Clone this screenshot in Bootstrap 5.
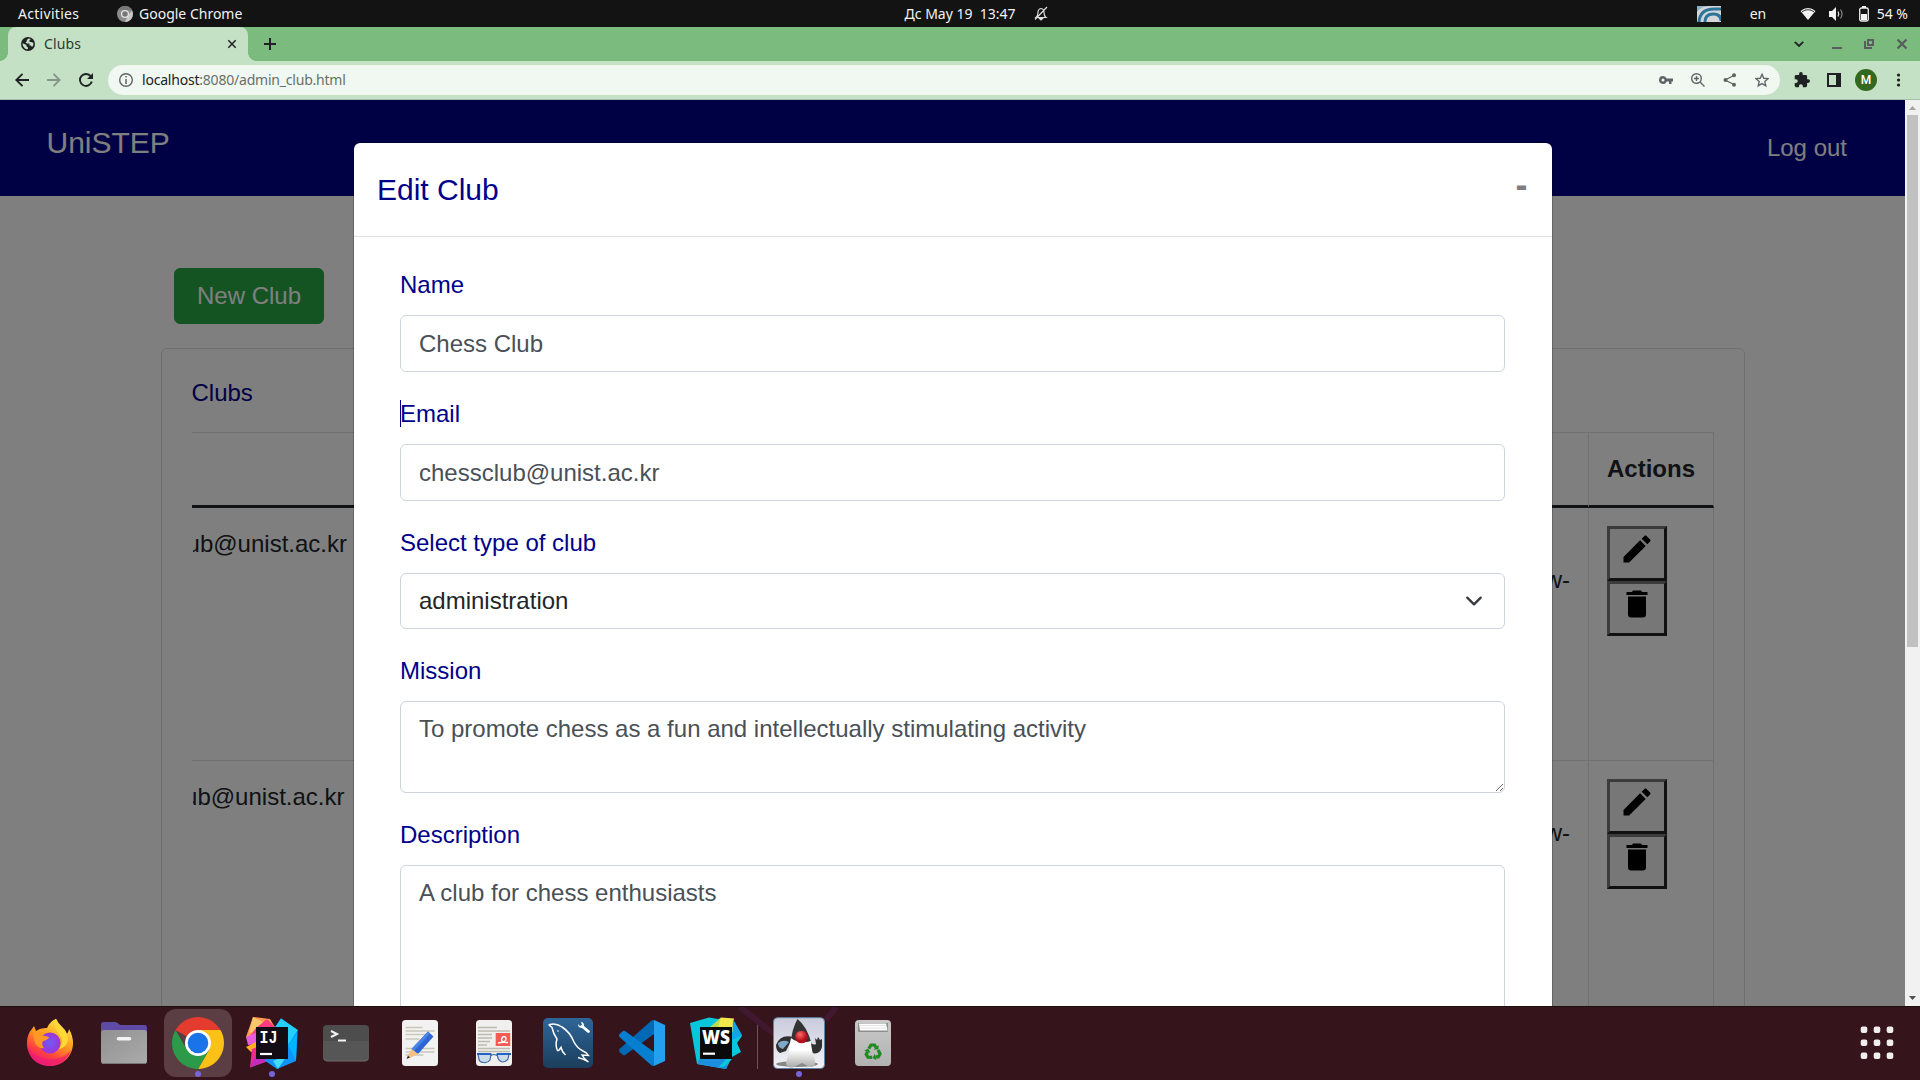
<!DOCTYPE html>
<html lang="en">
<head>
<meta charset="utf-8">
<title>Clubs</title>
<link href="https://cdn.jsdelivr.net/npm/bootstrap@5.3.0/dist/css/bootstrap.min.css" rel="stylesheet">
<style>
html,body{height:1080px;overflow:hidden}
body{font-family:"Liberation Sans",Arial,sans-serif;font-size:24px;line-height:36px;color:#212529;width:1920px}
svg{display:block;flex:none}
.sysfont{font-family:"Noto Sans","Open Sans",sans-serif;font-size:14px;line-height:20px;white-space:pre}
.topbar{height:27px;background:#131313;color:#f2f2f2}
.wide-track{letter-spacing:.3px}
.topside{flex:1 1 0}
.applabel{margin-left:6px}
.bell{margin-left:18px}
.tabstrip{height:34px;background:#7bbb7d;padding-left:8px;padding-right:5px}
.browsertab{width:240px;height:34px;background:#c5e1c5;border-radius:8px 8px 0 0;position:relative;padding:0 11px 0 13px;color:#2c3a2e}
.browsertab::before,.browsertab::after{content:"";position:absolute;bottom:0;width:8px;height:8px}
.browsertab::before{left:-8px;background:radial-gradient(circle at 0 0,transparent 7.5px,#c5e1c5 8px)}
.browsertab::after{right:-8px;background:radial-gradient(circle at 100% 0,transparent 7.5px,#c5e1c5 8px)}
.tabtitle{margin-left:9px;letter-spacing:.15px}
.toolbar{height:39px;background:#c5e1c5;border-bottom:1px solid #a9bfa9;padding:0 6px}
.omnibox{height:30px;border-radius:15px;background:#f1f8f1;margin:0 6px;padding:0 2px 0 11px}
.urltext{margin-left:9px;color:#68706b;letter-spacing:-.21px}
.urlhost{color:#202124}
.iconcell{width:32px;height:32px;display:flex;align-items:center;justify-content:center}
.avatar-m{width:22px;height:22px;border-radius:50%;background:#33691e;color:#fff;font:500 12px/22px Roboto,sans-serif;text-align:center}
.viewport{height:906px;position:relative;overflow:hidden;background:#fff}
.pagearea{width:1905px;height:906px;position:relative;overflow:hidden}
.sitenav{height:96px;background:#00008b;color:#fff;padding:0 58px 0 46.5px}
.sitename{font-size:30px;line-height:45px;margin-top:20px}
.logout{margin-top:30px}
.btn-new{--bs-btn-font-size:24px;--bs-btn-line-height:36px;--bs-btn-padding-x:22px;--bs-btn-padding-y:9px;--bs-btn-bg:#28a745;--bs-btn-color:#fff;--bs-btn-border-color:#28a745;--bs-btn-border-radius:6px;height:56px;width:150px;margin:72px 0 24px 174px;display:block;white-space:nowrap;text-align:left}
.clubcard{margin-left:161px;width:1584px;height:900px;border:1px solid #dfdfdf;border-radius:6px;padding:26px 30px 0}
.clubtitle{color:#00008b;margin-bottom:21px;margin-left:-.5px}
.clubtable{table-layout:fixed;width:1522px;border-collapse:separate;border-spacing:0}
.clubtable th{height:76px;border-top:1px solid #dee2e6;border-bottom:3px solid #212529;vertical-align:middle}
.clubtable td{height:253px;border-bottom:1px solid #dee2e6;vertical-align:top;padding-top:18px}
.clubtable .linkcell{padding-right:18px;text-align:right}
.actcol{width:126px;border-left:1px solid #dee2e6;border-right:1px solid #dee2e6;padding-left:18px}
.clipmail{width:154px;overflow:hidden;display:flex;justify-content:flex-end;white-space:nowrap}
.clipmail.shortclip{width:151.5px}
.toolbtn{width:60px;height:55px;border:3px solid;border-color:#767676 #222 #222 #767676;background:#efefef;padding:1px 9px 11px;display:block}
.dimmer{position:absolute;inset:0;background:rgba(0,0,0,.5)}
.editbox{position:absolute;left:353px;top:42px;width:1200px;height:1200px;background:#fff;background-clip:padding-box;border:1px solid rgba(0,0,0,.2);border-radius:7px}
.edithead{height:94px;border-bottom:1px solid #dee2e6;padding:24px 24px 24px 23px;color:#00008b}
.edithead h5{font-size:30px;line-height:45px;font-weight:400;margin:0}
.minus{font-weight:700;font-size:36px;line-height:36px;color:#000;opacity:.5;text-shadow:0 1px 0 #fff;margin-right:.5px}
.editbody{padding:30px 47px 0 46px}
.editbody .form-label{display:block;margin:0 0 12px;color:#00008b;position:relative}
.caret::before{content:"";position:absolute;left:0;top:4px;width:1px;height:27px;background:#00008b}
.editbody .form-control,.editbody .form-select{font-size:24px;line-height:36px;border:1px solid #ced4da;border-radius:6px;padding:9px 18px;margin-bottom:24px;height:57px;color:#495057;background-color:#fff}
.editbody .form-select{height:56px;color:#212529;background-size:24px 18px;background-position:right 18px center}
.editbody textarea.form-control{height:92px}
.editbody textarea.tallbox{height:240px}
.scrolltrack{position:absolute;right:0;top:0;width:15px;height:906px;background:#f1f1f1;display:flex;flex-direction:column;align-items:center}
.scrollthumb{width:11px;height:532px;background:#c1c1c1}
.dock{height:74px;background:#36141b;border-top:1px solid #1c0d10;padding:2px 9px 0 16px;position:relative}
.dockitem{width:68px;height:68px;margin-right:6px;border-radius:12px;position:relative}
.dockitem.active{background:#5b3e44}
.dockitem.running::after{content:"";position:absolute;left:31px;top:62px;width:6px;height:6px;border-radius:50%;background:#7764d8}
.docksep{width:1px;height:52px;margin:8px 7px 0 1px;background:#6d5358}
.docklines{position:absolute;left:730px;top:0}
</style>
</head>
<body>
<div class="topbar d-flex align-items-center">
  <div class="topside d-flex align-items-center">
    <span class="sysfont wide-track" style="margin-left:18px;width:99px">Activities</span>
    <svg width="16" height="16" viewBox="0 0 16 16"><circle cx="8" cy="8" r="8" fill="#8b8b8b"/><path d="M1 4A8 8 0 0 1 15 4H8z" fill="#777"/><path d="M15 4.500A8 8 0 0 1 8 16L11.500 9z" fill="#c9c9c9"/><circle cx="8" cy="8" r="3.400" fill="#777" stroke="#e6e6e6" stroke-width="1.300"/></svg>
    <span class="sysfont applabel">Google Chrome</span>
  </div>
  <span class="sysfont">Дс May 19  13:47</span>
  <div class="topside d-flex align-items-center">
    <svg class="bell" width="14" height="15" viewBox="0 0 14 15" fill="none" stroke="#ddd" stroke-width="1.200"><path d="M2 11.500Q4 10 4 6.500Q4 3 7 2.500Q10 3 10 6.500Q10 10 12 11.500zM1 13.500L13 1"/><path d="M5.500 12.500h3L7 14z" fill="#eee"/></svg>
    <div class="d-flex align-items-center ms-auto" style="padding-right:12px">
      <svg width="24" height="16" viewBox="0 0 24 16"><path fill="#d6d6da" d="M0 0h24v16H0z"/><path d="M2 16Q3 3 17 3h7M8 16Q8 8 16 8Q24 8 24 15" fill="none" stroke="#2b759b" stroke-width="3"/><path d="M0 6Q4 0 13 0H0z" fill="#8cb2c4"/></svg>
      <span class="sysfont" style="margin-left:29px;width:50px">en</span>
      <svg width="16" height="16" viewBox="0 0 16 16"><path d="M.500 5Q8-1 15.500 5L8 14z" fill="#f2f2f2"/><path d="M2 5.800Q8 1.500 14 5.800" fill="none" stroke="#333" stroke-width="1"/></svg>
      <svg style="margin-left:12px" width="16" height="16" viewBox="0 0 16 16"><path d="M1 5h3l4-4v14l-4-4H1z" fill="#f2f2f2"/><path d="M10 5.500Q11.500 8 10 10.500" fill="none" stroke="#ddd" stroke-width="1.300"/><path d="M12.500 3.500Q15.500 8 12.500 12.500" fill="none" stroke="#888" stroke-width="1.200"/></svg>
      <svg style="margin-left:15px" width="10" height="16" viewBox="0 0 10 16"><rect x=".700" y="2" width="8.600" height="13" rx="1.800" fill="none" stroke="#eee" stroke-width="1.300"/><path d="M3 0h4v2H3zM2 8h6v6H2z" fill="#f2f2f2"/></svg>
      <span class="sysfont" style="margin-left:8px">54 %</span>
    </div>
  </div>
</div>

<div class="tabstrip d-flex align-items-center">
  <div class="browsertab d-flex align-items-center">
    <svg width="14" height="14" viewBox="0 0 14 14"><circle cx="7" cy="7" r="7" fill="#202124"/><path d="M7.500 1.500L5.800 3v1.500L4.500 5.500l1.500 1h2.500v2H10l1 1.500q1.500-1.500 1.500-3.500Q12 5 10 5H8.500V3L10 2zM1.500 6.300q0 4 3.800 6L7 12V10.500L5.500 9.500V8z" fill="#c5e1c5"/></svg>
    <span class="sysfont tabtitle">Clubs</span>
    <svg class="ms-auto" width="10" height="10" viewBox="0 0 10 10"><path d="M1.300 1.300l7.400 7.400M8.700 1.300L1.300 8.700" stroke="#202124" stroke-width="1.500"/></svg>
  </div>
  <svg style="margin-left:16px" width="12" height="12" viewBox="0 0 12 12"><path d="M6 0v12M0 6h12" stroke="#202124" stroke-width="2"/></svg>
  <div class="d-flex ms-auto align-items-center">
    <svg width="10" height="6" viewBox="0 0 10 6"><path d="M.800.800L5 5L9.200.800" fill="none" stroke="#202124" stroke-width="1.800"/></svg>
    <svg style="margin-left:28px" width="10" height="10" viewBox="0 0 10 10"><path d="M0 8h10v2H0z" fill="#575c5c"/></svg>
    <svg style="margin-left:22px" width="10" height="10" viewBox="0 0 10 10" fill="none" stroke="#575c5c" stroke-width="1.900"><path d="M4 1h5v5H4zM1 2v7h7"/></svg>
    <svg style="margin-left:23px;margin-right:8px" width="10" height="10" viewBox="0 0 10 10"><path d="M.500.500l9 9M9.500.500l-9 9" stroke="#575c5c" stroke-width="2.200"/></svg>
  </div>
</div>

<div class="toolbar d-flex align-items-center">
  <div class="iconcell"><svg width="14" height="14" viewBox="0 0 14 14" fill="none" stroke="#202124" stroke-width="1.900"><path d="M14 7H1.500M7.500.800L1.300 7l6.200 6.200"/></svg></div>
  <div class="iconcell"><svg width="14" height="14" viewBox="0 0 14 14" fill="none" stroke="#849785" stroke-width="1.900"><path d="M0 7h12.500M6.500.800L12.700 7l-6.200 6.200"/></svg></div>
  <div class="iconcell"><svg width="14" height="14" viewBox="0 0 14 14"><path d="M11.700 3.200A6 6 0 1 0 12.800 8.500" fill="none" stroke="#202124" stroke-width="1.900"/><path d="M14 0v6H8z" fill="#202124"/></svg></div>
  <div class="omnibox d-flex align-items-center flex-grow-1">
    <svg width="14" height="14" viewBox="0 0 14 14"><circle cx="7" cy="7" r="6.300" fill="none" stroke="#5f6368" stroke-width="1.400"/><path d="M6.300 3h1.500v1.500H6.300zM6.300 6h1.500v5H6.300z" fill="#5f6368"/></svg>
    <span class="sysfont urltext"><span class="urlhost">localhost</span>:8080/admin_club.html</span>
    <div class="d-flex ms-auto">
      <div class="iconcell"><svg width="14" height="8" viewBox="0 0 14 8"><path fill-rule="evenodd" fill="#5f6368" d="M4 0a4 4 0 1 0 3.700 5.500H10V8h2.500V5.500H14v-3H7.700A4 4 0 0 0 4 0zm0 2.500a1.500 1.500 0 1 1 0 3a1.500 1.500 0 0 1 0-3z"/></svg></div>
      <div class="iconcell"><svg width="14" height="14" viewBox="0 0 14 14" fill="none" stroke="#5f6368" stroke-width="1.400"><circle cx="5.500" cy="5.500" r="4.800"/><path d="M9 9l4.500 4.500M3 5.500h5M5.500 3v5"/></svg></div>
      <div class="iconcell"><svg width="14" height="14" viewBox="0 0 14 14"><path d="M11 2.500L2 7l9 4.500" fill="none" stroke="#5f6368" stroke-width="1.300"/><g fill="#5f6368"><circle cx="11" cy="2.300" r="2"/><circle cx="2.500" cy="7" r="2"/><circle cx="11" cy="11.700" r="2"/></g></svg></div>
      <div class="iconcell"><svg width="14" height="14" viewBox="0 0 24 24"><path d="M12 2.200l3 6.800 7.400.7-5.600 5 1.700 7.300L12 18.100l-6.500 3.900 1.700-7.300-5.600-5L9 9z" fill="none" stroke="#5f6368" stroke-width="2.300"/></svg></div>
    </div>
  </div>
  <div class="iconcell"><svg width="16" height="16" viewBox="1 1 22 22"><path fill="#202124" d="M20.500 11H19V7a2 2 0 0 0-2-2h-4V3.500a2.500 2.500 0 0 0-5 0V5H4a2 2 0 0 0-2 2v3.800h1.500a2.700 2.700 0 0 1 0 5.400H2V20a2 2 0 0 0 2 2h3.800v-1.500a2.700 2.700 0 0 1 5.400 0V22H17a2 2 0 0 0 2-2v-4h1.500a2.500 2.500 0 0 0 0-5z"/></svg></div>
  <div class="iconcell"><svg width="14" height="14" viewBox="0 0 14 14"><path fill="#202124" fill-rule="evenodd" d="M0 0h14v14H0zM2 2v10h7V2z"/></svg></div>
  <div class="iconcell"><div class="avatar-m">M</div></div>
  <div class="iconcell"><svg width="4" height="14" viewBox="0 0 4 14" fill="#202124"><circle cx="2.500" cy="2" r="1.600"/><circle cx="2.500" cy="7" r="1.600"/><circle cx="2.500" cy="12" r="1.600"/></svg></div>
</div>

<div class="viewport">
  <div class="pagearea">
    <div class="sitenav d-flex justify-content-between align-items-start">
      <span class="sitename">UniSTEP</span><span class="logout">Log out</span>
    </div>
    <button class="btn btn-new">New Club</button>
    <div class="clubcard">
      <div class="clubtitle">Clubs</div>
      <table class="clubtable">
        <thead><tr><th></th><th></th><th class="actcol">Actions</th></tr></thead>
        <tbody>
          <tr><td><div class="clipmail">ub@unist.ac.kr</div></td><td class="linkcell"><br>w-</td>
          <td class="actcol">
            <button class="toolbtn"><svg width="36" height="36" viewBox="0 0 24 24"><path d="M20.710 7.040c.390-.390.390-1.040 0-1.410l-2.340-2.340c-.370-.390-1.020-.390-1.410 0l-1.840 1.830 3.750 3.750M3 17.250V21h3.750L17.810 9.930l-3.750-3.750z"/></svg></button>
            <button class="toolbtn"><svg width="36" height="36" viewBox="0 0 24 24"><path d="M19 4h-3.500l-1-1h-5l-1 1H5v2h14M6 19a2 2 0 0 0 2 2h8a2 2 0 0 0 2-2V7H6z"/></svg></button>
          </td></tr>
          <tr><td><div class="clipmail shortclip">ub@unist.ac.kr</div></td><td class="linkcell"><br>w-</td>
          <td class="actcol">
            <button class="toolbtn"><svg width="36" height="36" viewBox="0 0 24 24"><path d="M20.710 7.040c.390-.390.390-1.040 0-1.410l-2.340-2.340c-.370-.390-1.020-.390-1.410 0l-1.840 1.830 3.750 3.750M3 17.250V21h3.750L17.810 9.930l-3.750-3.750z"/></svg></button>
            <button class="toolbtn"><svg width="36" height="36" viewBox="0 0 24 24"><path d="M19 4h-3.500l-1-1h-5l-1 1H5v2h14M6 19a2 2 0 0 0 2 2h8a2 2 0 0 0 2-2V7H6z"/></svg></button>
          </td></tr>
        </tbody>
      </table>
    </div>
    <div class="dimmer"></div>
    <div class="editbox">
      <div class="edithead d-flex justify-content-between align-items-start"><h5>Edit Club</h5><span class="minus">-</span></div>
      <div class="editbody">
        <label class="form-label">Name</label>
        <input class="form-control" value="Chess Club">
        <label class="form-label caret">Email</label>
        <input class="form-control" value="chessclub@unist.ac.kr">
        <label class="form-label">Select type of club</label>
        <select class="form-select"><option>administration</option></select>
        <label class="form-label">Mission</label>
        <textarea class="form-control">To promote chess as a fun and intellectually stimulating activity</textarea>
        <label class="form-label">Description</label>
        <textarea class="form-control tallbox">A club for chess enthusiasts</textarea>
      </div>
    </div>
  </div>
  <div class="scrolltrack">
    <svg width="15" height="15" viewBox="0 0 15 15"><path d="M7.500 6L11 10H4z" fill="#a3a3a3"/></svg>
    <div class="scrollthumb"></div>
    <svg class="mt-auto" width="15" height="15" viewBox="0 0 15 15"><path d="M7.500 9L11 5H4z" fill="#505050"/></svg>
  </div>
</div>

<div class="dock d-flex align-items-start">
  <svg class="docklines" width="110" height="40" viewBox="0 0 110 40"><path d="M30 0L64 27M126 0L116 13" transform="translate(-20 0)" stroke="#40182f" stroke-width="6"/></svg>
  <div class="dockitem"><svg width="68" height="68" viewBox="0 0 68 68">
    <defs><linearGradient id="ff" x1=".8" y1="0" x2=".3" y2="1"><stop offset="0" stop-color="#fff14a"/><stop offset=".45" stop-color="#ff9a1f"/><stop offset=".75" stop-color="#ff4040"/><stop offset="1" stop-color="#e3148a"/></linearGradient><radialGradient id="fp"><stop offset="0" stop-color="#6d5cf5"/><stop offset="1" stop-color="#a033d6"/></radialGradient></defs>
    <path d="M34 57C20 57 11 47 11 34C11 28 13 23 16 20L18 17L20 22Q24 19 31 19Q34 12 40 9.700Q42 15 46 18Q50 21 51 25Q53 22 53 20Q57 27 57 34C57 47 47 57 34 57z" fill="url(#ff)"/>
    <path d="M34 57C22 57 13 49 11 36Q17 49 32 50Q48 51 55 41C51 52 43 57 34 57z" fill="#ef1d72" opacity=".7"/>
    <circle cx="34" cy="34" r="10.500" fill="url(#fp)"/>
    <path d="M17 22Q23 23 25 26L33 28Q32 31 27 32Q25 35 28 39Q22 40 19 34Q17 28 17 22z" fill="#ff9826"/>
    <path d="M40 10Q37 18 43 25Q49 32 43 40Q50 39 52 31Q52 24 46 18Q42 14 40 10z" fill="#ffd938"/>
  </svg></div>
  <div class="dockitem"><svg width="68" height="68" viewBox="0 0 68 68">
    <defs><linearGradient id="fl" x2="1" y2="1"><stop offset="0" stop-color="#919191"/><stop offset="1" stop-color="#ababab"/></linearGradient></defs>
    <path d="M11 25V16a3 3 0 0 1 3-3h11q2 0 3 1.500T31 16h23a3 3 0 0 1 3 3v6z" fill="#6750b0"/><path d="M11 17V16a3 3 0 0 1 3-3h11L31 16h23a3 3 0 0 1 3 3v2H11z" fill="#5a47a0" opacity=".6"/>
    <rect x="11" y="21" width="46" height="34" rx="3" fill="url(#fl)"/><path d="M12 54.500h44" stroke="#777" stroke-width="1"/><rect x="26.700" y="28" width="14.600" height="3.600" rx="1.800" fill="#f5f5f5"/>
  </svg></div>
  <div class="dockitem active running"><svg width="68" height="68" viewBox="0 0 68 68">
    <path d="M34 34L11.500 21A26 26 0 0 1 56.500 21z" fill="#e33b2e"/><path d="M34 21H56.500A26 26 0 0 1 34 60L45.300 40.500z" fill="#fbc116"/><path d="M11.500 21A26 26 0 0 0 34 60L45.300 40.500L34 47L22.700 40.500z" fill="#2b9b49"/>
    <circle cx="34" cy="34" r="13" fill="#fff"/><circle cx="34" cy="34" r="10.300" fill="#1a73e8"/>
  </svg></div>
  <div class="dockitem running"><svg width="68" height="68" viewBox="0 0 68 68">
    <path d="M15 8L32 10L38 20L17 40L8 28z" fill="#ff9b50"/><path d="M15 8l-4 15 10 6 8-14z" fill="#f8c76c"/><path d="M29 10l8 8-10 8-17 3 8-10z" fill="#fa3b82"/><path d="M8 28l12-5v12l-10 1z" fill="#e65cdc"/><path d="M8 38l12-6v9l-7 2z" fill="#ffb01e"/>
    <path d="M14 40l8-3 14 13-24 8.500z" fill="#f62b88"/><path d="M12 58.500l7-16 15 8z" fill="#c62bbd"/>
    <path d="M37 18l6-8.500L59.700 21L58 52L39 60L26 51L45 45z" fill="#1093fa"/><path d="M43 9.500L59.700 21l-9 14-14-16z" fill="#25cffb"/><path d="M50 36l9-12-1 27z" fill="#00b5ff"/><path d="M50 45l-15 7 5 8z" fill="#42dbf9"/>
    <rect x="18" y="18" width="32" height="32" fill="#130c14"/><path d="M22 45h12" stroke="#fff" stroke-width="2.200"/>
    <text x="21.500" y="34" font-family="Liberation Mono" font-weight="700" font-size="18" fill="#fff" textLength="18" lengthAdjust="spacingAndGlyphs">IJ</text>
  </svg></div>
  <div class="dockitem"><svg width="68" height="68" viewBox="0 0 68 68">
    <rect x="11" y="16" width="46" height="36" rx="4" fill="#4d4d4d"/><path d="M11 32h46v16a4 4 0 0 1-4 4H15a4 4 0 0 1-4-4z" fill="#565656"/><path d="M12 50q1 2 3 2h38q2 0 3-2" fill="none" stroke="#6c6c6c"/><path d="M19 22l6 3-6 3M26 31.500h8" fill="none" stroke="#f3f3f3" stroke-width="2"/>
  </svg></div>
  <div class="dockitem"><svg width="68" height="68" viewBox="0 0 68 68">
    <rect x="16" y="11" width="36" height="46" rx="3.500" fill="#f2f2f2"/><path d="M19.500 18.500h17M19.500 22h29M19.500 25.500h22M19.500 30h14M19.500 39.500h29M19.500 43h29M19.500 46h18" stroke="#c9c6ba" stroke-width="1.300"/>
    <path d="M42 22.500l5.500 5L32 45l-6.500-5z" fill="#2d66d4"/><path d="M42 22.500l2 2L28 42l-2.500-2z" fill="#4b83e8"/><path d="M25.500 40l6.500 5-8 4z" fill="#f6c183"/><path d="M25.500 40l-5 9.800 4-1z" fill="#f6c183"/><path d="M22 46.500l2 2-3.500 1.500z" fill="#353535"/>
  </svg></div>
  <div class="dockitem"><svg width="68" height="68" viewBox="0 0 68 68">
    <rect x="16" y="11" width="36" height="46" rx="3.500" fill="#f0f0ee"/><path d="M18 18.500h19M18 22h32M18 25.500h14M18 29h14M18 32.500h12M18 36h9M18 39.500h32M18 42.500h32" stroke="#bdbbaf" stroke-width="1.300"/>
    <rect x="35.700" y="24" width="14.500" height="13" fill="#f45b52"/><path d="M38 34q9-1 8-5q-2-3-4 0q-2 5 6 4.500" fill="none" stroke="#fff" stroke-width="1.400"/>
    <path d="M18 45h13l-1 6q-2 3-6 2.500q-4 0-5-3zM37 45h12l-1 5q-2 3-6 3q-3-1-4-4zM31 46.500q3-2 6 0" fill="#cbdbec" stroke="#3f6ba8" stroke-width="1.200"/><path d="M17 45h14M37 45h14" stroke="#2162c4" stroke-width="2.200"/>
  </svg></div>
  <div class="dockitem"><svg width="68" height="68" viewBox="0 0 68 68">
    <defs><linearGradient id="my" x2="0" y2="1"><stop offset="0" stop-color="#2f6699"/><stop offset="1" stop-color="#1b3e5c"/></linearGradient></defs>
    <rect x="9" y="9" width="50" height="50" rx="5" fill="url(#my)"/>
    <path d="M31.500 46Q28 43 27 38.500Q24.500 42.500 23.500 41.500Q21 36 23 30Q19 24 18 18.500Q13.500 15 16 15.500Q22 14 28 18Q36 23 40 33Q43 39 49 42Q53 43.500 54.500 46.500L48 46Q50 50 54.500 53Q50 50 44 48.500" fill="none" stroke="#fff" stroke-width="1.500"/>
    <circle cx="24" cy="22" r=".8" fill="#fff"/><path d="M44 15q0 4 4 4l6 5q2 0 2-2l-6-5q0-4-3-4l1 3-2 1z" fill="#fff"/>
  </svg></div>
  <div class="dockitem"><svg width="68" height="68" viewBox="0 0 68 68">
    <path d="M46 11L57 16V52L46 57z" fill="#23a0ee"/><path d="M46 11v14L17 46q-1 .500-2 0l-3.500-3q-1-1.500 0-3L43 12q1-1 3-1z" fill="#0069b5"/><path d="M46 57V43L17 22q-1-.500-2 0l-3.500 3q-1 1.500 0 3L43 56q1 1 3 1z" fill="#077fd0"/>
  </svg></div>
  <div class="dockitem"><svg width="68" height="68" viewBox="0 0 68 68">
    <path d="M8 14L27 8.500L36 10L47 9L54 18L60 27L55 34L59 43L50 48L44 60L15 55z" fill="#08c6dc"/><path d="M15 55l3-6h30l-4 11z" fill="#1d8fe0"/><path d="M36 59l8-9h6l-7 7z" fill="#08c6dc"/><path d="M39 8.500L52 9.500L51 23L30 18z" fill="#f3e94c"/><path d="M51 10l9 16-10 5z" fill="#12a5e8"/><path d="M39 8.500L28 18h8z" fill="#b7dd55"/>
    <rect x="18" y="18" width="32" height="32" fill="#0a0a0a"/><path d="M21 44.700h12" stroke="#fff" stroke-width="2.200"/>
    <text x="20" y="35" font-family="Open Sans,sans-serif" font-weight="800" font-size="18.500" fill="#fff" textLength="28" lengthAdjust="spacingAndGlyphs">WS</text>
  </svg></div>
  <div class="docksep"></div>
  <div class="dockitem running"><svg width="68" height="68" viewBox="0 0 68 68">
    <defs><linearGradient id="jv" x2="0" y2="1"><stop offset="0" stop-color="#c9cbdc"/><stop offset="1" stop-color="#f2f2f7"/></linearGradient><linearGradient id="jw" x2="0" y2="1"><stop offset=".4" stop-color="#fff"/><stop offset="1" stop-color="#aaa"/></linearGradient><radialGradient id="jr" cx=".4" cy=".3"><stop offset="0" stop-color="#ff6a6a"/><stop offset="1" stop-color="#b3101a"/></radialGradient></defs>
    <rect x="8.500" y="8.700" width="51" height="50.800" rx="4" fill="url(#jv)" stroke="#5d84a5"/><ellipse cx="32" cy="55" rx="21" ry="3" fill="#888"/>
    <path d="M28 28q-13-3-17 8q0 6 4 8l6-2 3-6zM43 31q5 6 8 4l-1-6 2 2 1-3 2 3 2-1v8q-2 8-10 6z" fill="#303030"/><path d="M13 34q5-4 11-1l-6 7q-5-1-5-6z" fill="#7fa7c9"/>
    <path d="M32.500 10q9 7 14 24L26 32q1-12 6.500-22z" fill="#333"/><path d="M26 29q9 7 20 3q0 8 4 19q1 8-5 7l-8-4-8 4q-7 2-8-4q1-5 3-9q0-9 2-16z" fill="url(#jw)"/><circle cx="36.500" cy="28" r="6.300" fill="url(#jr)"/>
  </svg></div>
  <div class="dockitem"><svg width="68" height="68" viewBox="0 0 68 68">
    <defs><linearGradient id="tr" x2="0" y2="1"><stop offset="0" stop-color="#c9c9c9"/><stop offset="1" stop-color="#b2b2b2"/></linearGradient></defs>
    <rect x="16" y="11" width="36" height="46" rx="4" fill="url(#tr)"/><path d="M19 14h30v8q0 1-1 1H20q-1 0-1-1z" fill="#8d8d8d"/><path d="M20 14.500h27l1.500 7H21z" fill="#fff"/><path d="M20 16.500h27M20.500 19h28" stroke="#ddd" stroke-width=".8"/>
    <g fill="none" stroke="#218a21" stroke-width="3.200"><path id="rcarm" d="M29.800 39.600L32 36h3.500l1.500 2.500"/><use href="#rcarm" transform="rotate(120 34 43)"/><use href="#rcarm" transform="rotate(240 34 43)"/></g>
    <g fill="#218a21"><path id="rctip" d="M34.500 40.500h5V36z"/><use href="#rctip" transform="rotate(120 34 43)"/><use href="#rctip" transform="rotate(240 34 43)"/></g>
  </svg></div>
  <svg class="ms-auto" width="68" height="68" viewBox="0 0 68 68" fill="#f0eeee"><g id="gr"><rect x="17.700" y="17.500" width="6.600" height="6.600" rx="2"/><rect x="30.700" y="17.500" width="6.600" height="6.600" rx="2"/><rect x="43.700" y="17.500" width="6.600" height="6.600" rx="2"/></g><use href="#gr" y="13"/><use href="#gr" y="26"/></svg>
</div>
<script src="https://cdn.jsdelivr.net/npm/bootstrap@5.3.0/dist/js/bootstrap.bundle.min.js"></script>
</body>
</html>
